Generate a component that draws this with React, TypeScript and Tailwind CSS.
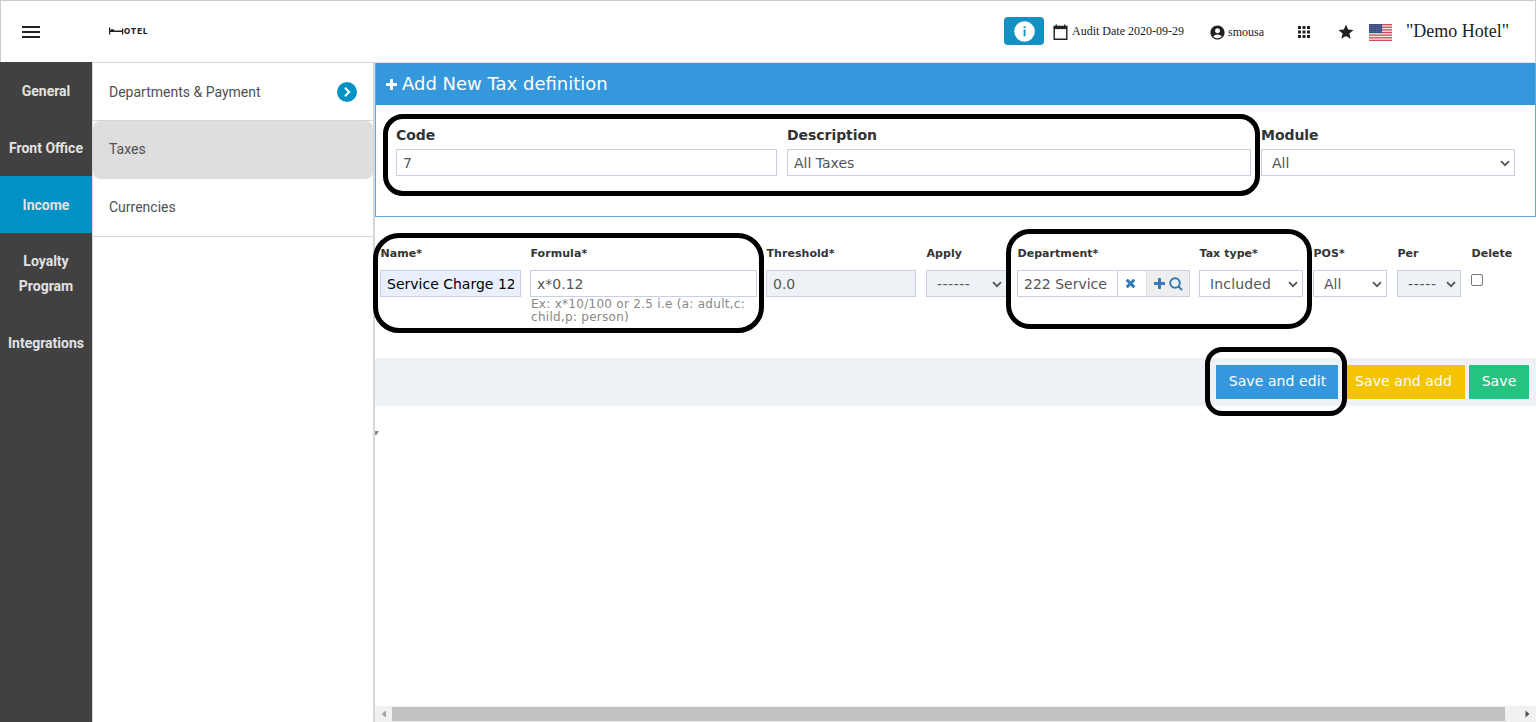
import React from 'react';
import { MdMenu, MdApps, MdStar, MdAccountCircle } from 'react-icons/md';

const sections = [
  { name: 'General', height: 'h-[57px] pt-px' },
  { name: 'Front Office', height: 'h-[57px] pt-px' },
  { name: 'Income', height: 'h-[57px] pt-px', active: true },
  { name: 'Loyalty Program', height: 'h-[82px]' },
  { name: 'Integrations', height: 'h-[57px]' },
];

const Chevron = () => (
  <svg viewBox="0 0 10 7" className="w-[10px] h-[7px] mt-px shrink-0" fill="none" stroke="#555" strokeWidth="1.8">
    <path d="M1 1.2 L5 5.2 L9 1.2" />
  </svg>
);

const Plus = ({ className }: { className: string }) => (
  <svg viewBox="0 0 11 11" className={`w-[11px] h-[11px] shrink-0 ${className}`} fill="currentColor">
    <path d="M4.700 0H6.300Q7 0 7 .7V4H10.300Q11 4 11 4.700V6.300Q11 7 10.300 7H7V10.300Q7 11 6.300 11H4.700Q4 11 4 10.300V7H.7Q0 7 0 6.300V4.700Q0 4 .7 4H4V.7Q4 0 4.700 0Z" />
  </svg>
);

interface FieldProps {
  label: string;
  width: string;
  className?: string;
  large?: boolean;
  children: React.ReactNode;
}

const Field = ({ label, width, className = '', large, children }: FieldProps) => (
  <div className={`shrink-0 ${width} ${className}`}>
    <div
      className={`font-bold text-[#333] whitespace-nowrap ${
        large
          ? 'text-[14px] leading-[20px] mb-[4px] tracking-[-0.05px]'
          : 'text-[11px] leading-[16px] mb-[8px] pl-[0.5px] tracking-[0.05px]'
      }`}
    >
      {label}
    </div>
    {children}
  </div>
);

interface BoxProps {
  value: string;
  className?: string;
}

const TextBox = ({ value, className = 'bg-white text-[#555]' }: BoxProps) => (
  <div className={`h-[27px] border border-[#c8cfde] px-[6px] pt-px flex items-center text-[14px] ${className}`}>
    <span className="overflow-hidden whitespace-nowrap">{value}</span>
  </div>
);

const SelectBox = ({ value, className = 'bg-white' }: BoxProps) => (
  <div className={`h-[27px] border border-[#c8cfde] pl-[10px] pr-[4px] pt-px flex items-center justify-between text-[14px] text-[#555] ${className}`}>
    <span className="overflow-hidden whitespace-nowrap">{value}</span>
    <Chevron />
  </div>
);

const Highlight = ({ className }: { className: string }) => (
  <div className={`absolute border-[5px] border-black pointer-events-none ${className}`} />
);

const Flag = () => (
  <svg viewBox="0 0 23 17" className="w-[23px] h-[17px]">
    <rect width="23" height="17" fill="#f8e9ea" />
    {[0, 1, 2, 3, 4, 5, 6].map((i) => (
      <rect key={i} y={i * 2.62} width="23" height="1.3" fill="#cf4a54" />
    ))}
    <rect width="13" height="9" fill="#3c4f85" />
    {[1, 3, 5, 7].map((y) => (
      <path key={y} d={`M1 ${y + 0.5}H13`} stroke="#8290b5" strokeWidth="0.6" strokeDasharray="0.8 1.2" />
    ))}
  </svg>
);

const Header = () => (
  <header className="h-[62px] flex items-center border-t border-l border-r border-[#ccc] font-['Liberation_Serif',serif] text-[#212121]">
    <MdMenu className="ml-[18px] text-[24px]" />
    <div className="ml-[66px] mb-[2px] flex items-center h-[9px]">
      <svg viewBox="0 0 15 8" className="w-[15px] h-[8px]" fill="#222">
        <path d="M0 0.500h1.200v3l1-1.200h2.400l.8 1.200h7.600v-2h1.300v6h-1.300v-2.500h-11.800v2.500h-1.200z" />
      </svg>
      <span className="font-['Inter',sans-serif] font-extrabold text-[8px] leading-[8px] tracking-[0.9px]">OTEL</span>
    </div>
    <div className="ml-auto flex items-center">
      <div className="w-[40px] h-[28px] mb-[1px] rounded-[4px] bg-[#1590c4] flex items-center justify-center">
        <svg viewBox="0 0 21 21" className="w-[21px] h-[21px]">
          <circle cx="10.500" cy="10.500" r="10.300" fill="#fff" />
          <path d="M9.600 5.300h2v1.800h-2zM9.600 8.500h1.900v6.800h-1.900z" fill="#1590c4" />
        </svg>
      </div>
      <svg viewBox="0 0 15 17" className="ml-[9px] mt-px w-[15px] h-[17px]" fill="none" stroke="#222" strokeWidth="1.4">
        <path d="M1.200 2.500H13.800V15.300H1.200Z" />
        <path d="M.8 3.800H14.200" strokeWidth="2.600" />
        <path d="M3.300 .5V3M11.700 .5V3" />
      </svg>
      <span className="ml-[4px] mb-px text-[12px] w-[112px] whitespace-nowrap">Audit Date 2020-09-29</span>
      <MdAccountCircle className="ml-[25px] mt-px text-[17px]" />
      <span className="ml-[2px] text-[12px] w-[37px]">smousa</span>
      <MdApps className="ml-[30px] text-[18px]" />
      <MdStar className="ml-[24px] text-[18px]" />
      <div className="ml-[14px] mt-px"><Flag /></div>
      <span className="ml-[14px] text-[18px] w-[103px] whitespace-nowrap">"Demo Hotel"</span>
      <div className="w-[26px]" />
    </div>
  </header>
);

const Sidebar = () => (
  <nav className="w-[92px] shrink-0 bg-[#414141] font-['Roboto',sans-serif] font-bold text-[14px] leading-[25px] text-[#e2e2e2] text-center">
    {sections.map((section) => (
      <div
        key={section.name}
        className={`flex items-center justify-center ${section.height} ${section.active ? 'bg-[#0091c5]' : ''}`}
      >
        {section.name}
      </div>
    ))}
  </nav>
);

const SubMenu = () => (
  <div className="w-[283px] shrink-0 border-t border-l border-r-2 border-[#d8d8d8] font-['Roboto',sans-serif] text-[14px] text-[#505050]">
    <div className="h-[58px] border-b border-[#d5d5d5] pl-[16px] pr-[16px] flex items-center justify-between">
      <span className="mt-px">Departments &amp; Payment</span>
      <svg viewBox="0 0 20 20" className="w-[20px] h-[20px]">
        <circle cx="10" cy="10" r="10" fill="#0091c5" />
        <path d="M8 5.800L12.200 10L8 14.200" fill="none" stroke="#fff" strokeWidth="2" />
      </svg>
    </div>
    <div className="h-[58px] pl-[16px] pb-px rounded-[7px] bg-[#dedede] flex items-center">Taxes</div>
    <div className="h-[58px] pl-[16px] border-b border-[#d5d5d5] flex items-center">Currencies</div>
  </div>
);

const TaxForm = () => (
  <main className="relative w-[1161px] shrink-0 border-t border-[#e4e4e4] flex flex-col font-['DejaVu_Sans',sans-serif]">
    <div className="h-[154px] border border-t-0 border-[#5facdf]">
      <div className="h-[42px] bg-[#3598dc] text-white flex items-center pl-[10px] pb-[2px] text-[18px]">
        <Plus className="mr-[5px] mt-[3px]" />
        Add New Tax definition
      </div>
      <div className="flex pl-[20px] pt-[20px]">
        <Field large label="Code" width="w-[381px]" className="mr-[10px]"><TextBox value="7" /></Field>
        <Field large label="Description" width="w-[464px]" className="mr-[10px]"><TextBox value="All Taxes" /></Field>
        <Field large label="Module" width="w-[254px]"><SelectBox value="All" /></Field>
      </div>
    </div>

    <div className="h-[141px] pl-[5px] pt-[29px] flex">
      <Field label="Name*" width="w-[141px]" className="mr-[9px]">
        <TextBox value="Service Charge 12%" className="bg-[#e8f0fe] text-black" />
      </Field>
      <Field label="Formula*" width="w-[227px]" className="mr-[9px]">
        <TextBox value="x*0.12" />
        <p className="text-[12px] leading-[13px] tracking-[0.28px] text-[#888] whitespace-nowrap pl-px pt-px">
          Ex: x*10/100 or 2.5 i.e (a: adult,c:
          <br />
          child,p: person)
        </p>
      </Field>
      <Field label="Threshold*" width="w-[150px]" className="mr-[10px]">
        <TextBox value="0.0" className="bg-[#eef1f5] text-[#555]" />
      </Field>
      <Field label="Apply" width="w-[81px]" className="mr-[10px]">
        <SelectBox value="------" className="bg-[#eef1f5] tracking-[0.5px]" />
      </Field>
      <Field label="Department*" width="w-[173px]" className="mr-[9px]">
        <div className="h-[27px] border border-[#c8cfde] flex text-[14px] text-[#337ab7]">
          <div className="w-[100px] pl-[6px] pt-px flex items-center border-r border-[#c8cfde] text-[#555] whitespace-nowrap">
            222 Service
          </div>
          <div className="w-[29px] pr-[3px] flex items-center justify-center border-r border-[#dcdfe6]">
            <Plus className="rotate-45" />
          </div>
          <div className="flex-1 bg-[#eee] flex items-center pl-[7px]">
            <Plus className="mb-px" />
            <svg viewBox="0 0 14 14" className="w-[14px] h-[14px] ml-[4px]" fill="none" stroke="#337ab7" strokeWidth="2">
              <circle cx="6" cy="6" r="4.800" />
              <path d="M9.500 9.500L13 13" />
            </svg>
          </div>
        </div>
      </Field>
      <Field label="Tax type*" width="w-[104px]" className="mr-[10px]">
        <SelectBox value="Included" className="bg-white tracking-[0.15px]" />
      </Field>
      <Field label="POS*" width="w-[74px]" className="mr-[10px]"><SelectBox value="All" /></Field>
      <Field label="Per" width="w-[64px]" className="mr-[10px]">
        <SelectBox value="-----" className="bg-[#eef1f5] tracking-[0.7px]" />
      </Field>
      <Field label="Delete" width="w-[45px]">
        <div className="w-[12px] h-[12px] mt-[12px] border border-[#767676] rounded-[2px] bg-white" />
      </Field>
    </div>

    <div className="h-[48px] bg-[#eef1f5] flex items-center justify-end gap-[4px] pr-[7px] text-[14px] tracking-[0.08px] text-white">
      <div className="w-[122px] h-[34px] bg-[#3598dc] flex items-center justify-center pl-px pb-[2px]">Save and edit</div>
      <div className="w-[123px] h-[34px] bg-[#f4c400] flex items-center justify-center pb-[2px]">Save and add</div>
      <div className="w-[60px] h-[34px] bg-[#26c281] flex items-center justify-center pb-[2px]">Save</div>
    </div>

    <svg viewBox="0 0 4 4" className="w-[4px] h-[4px] mt-[25px]"><path d="M0 0H4L1.500 4H0Z" fill="#888" /></svg>

    <div className="mt-auto h-[16px] bg-[#f1f1f1] flex items-center">
      <svg viewBox="0 0 17 16" className="w-[17px] h-[16px]"><path d="M11 4.500V11.500L6.500 8Z" fill="#a3a3a3" /></svg>
      <div className="w-[1113px] h-[14px] bg-[#c1c1c1]" />
      <svg viewBox="0 0 31 16" className="w-[31px] h-[16px]"><path d="M20.500 4.500V11.500L24.500 8Z" fill="#505050" /></svg>
    </div>

    <Highlight className="left-[8px] top-[51px] w-[877px] h-[82px] rounded-[20px]" />
    <Highlight className="left-[-2px] top-[170px] w-[391px] h-[100px] rounded-[26px]" />
    <Highlight className="left-[631px] top-[166px] w-[306px] h-[100px] rounded-[24px]" />
    <Highlight className="left-[830px] top-[284px] w-[142px] h-[69px] rounded-[17px]" />
  </main>
);

const App = () => {
  return (
    <div className="w-[1536px] h-[722px] bg-white flex flex-col overflow-hidden">
      <Header />
      <div className="flex flex-1">
        <Sidebar />
        <SubMenu />
        <TaxForm />
      </div>
    </div>
  );
};

export default App;
